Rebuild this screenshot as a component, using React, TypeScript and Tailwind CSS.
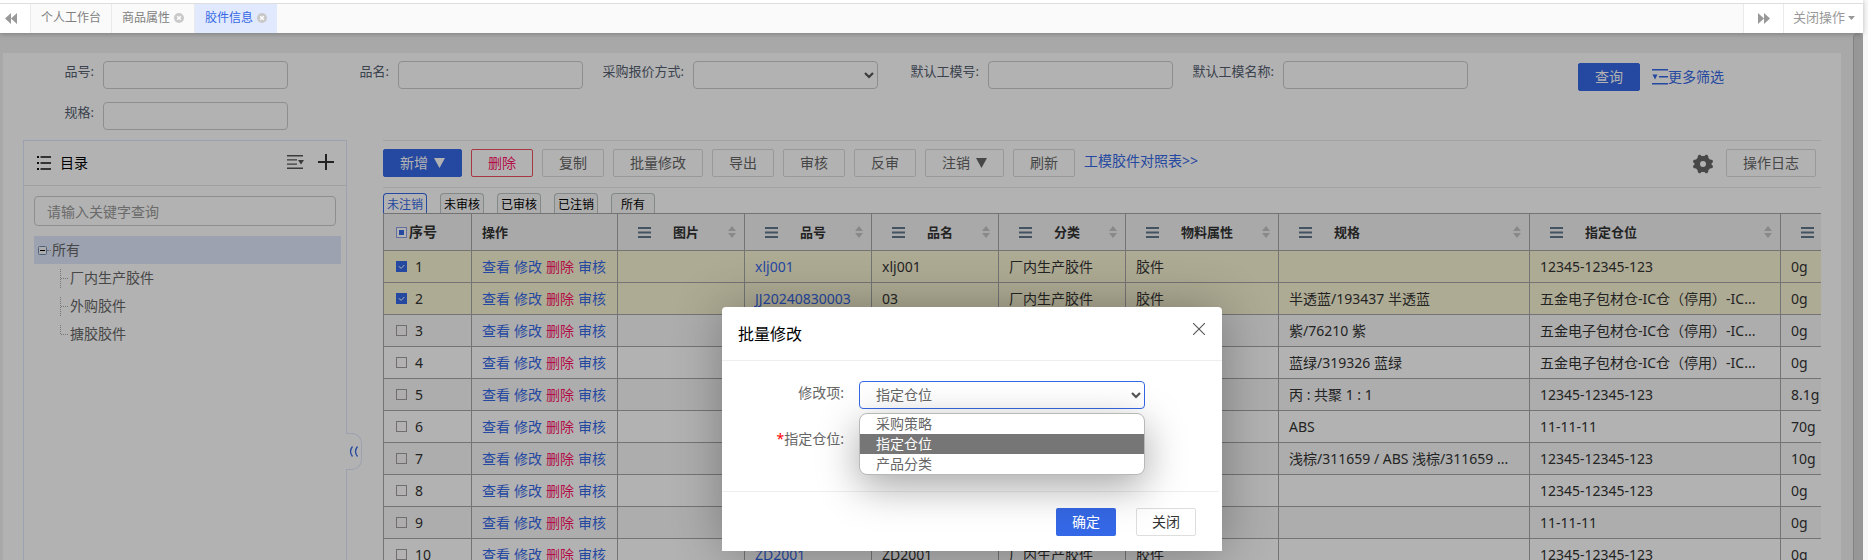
import type { ReactNode } from 'react';

const filters = [
  { id: 'code', label: '品号:' },
  { id: 'name', label: '品名:' },
  { id: 'quote', label: '采购报价方式:', select: true },
  { id: 'mold', label: '默认工模号:' },
  { id: 'moldName', label: '默认工模名称:' },
  { id: 'spec', label: '规格:' },
];

const columns = ['图片', '品号', '品名', '分类', '物料属性', '规格', '指定仓位'];

const LONG = '五金电子包材仓-IC仓（停用）-IC...';
const A = '12345-12345-123';
const B = '11-11-11';

const rows = [
  { code: 'xlj001', name: 'xlj001', type: '厂内生产胶件', attr: '胶件', spec: '', place: A, weight: '0g', checked: true },
  { code: 'JJ20240830003', name: '03', type: '厂内生产胶件', attr: '胶件', spec: '半透蓝/193437 半透蓝', place: LONG, weight: '0g', checked: true },
  { spec: '紫/76210 紫', place: LONG, weight: '0g' },
  { spec: '蓝绿/319326 蓝绿', place: LONG, weight: '0g' },
  { spec: '丙 : 共聚 1 : 1', place: A, weight: '8.1g' },
  { spec: 'ABS', place: B, weight: '70g' },
  { spec: '浅棕/311659 / ABS 浅棕/311659 ...', place: A, weight: '10g' },
  { spec: '', place: A, weight: '0g' },
  { spec: '', place: B, weight: '0g' },
  { code: 'ZD2001', name: 'ZD2001', type: '厂内生产胶件', attr: '胶件', spec: '', place: A, weight: '0g' },
];

function Chevron() {
  return (
    <svg viewBox="0 0 10 7" className="pointer-events-none absolute right-1 top-[11px] h-[7px] w-[10px]" fill="none" stroke="#555" strokeWidth="2.2">
      <path d="M1 1l4 4 4-4" />
    </svg>
  );
}

function Burger() {
  return (
    <svg viewBox="0 0 13 11" className="h-[11px] w-[13px] shrink-0" fill="#62778c">
      <path d="M0 0h13v2H0zM0 4.5h13v2H0zM0 9h13v2H0z" />
    </svg>
  );
}

function Sort() {
  return (
    <svg viewBox="0 0 8 12" className="ml-auto h-3 w-2 shrink-0" fill="#c4c4c4">
      <path d="M0 5l4-5 4 5zM0 7h8l-4 5z" />
    </svg>
  );
}

function CloseDot() {
  return (
    <svg viewBox="0 0 10 10" className="h-[10px] w-[10px]">
      <circle cx="5" cy="5" r="5" fill="#c9c9c9" />
      <path d="M3.2 3.2l3.6 3.6M6.8 3.2L3.2 6.8" stroke="#fff" strokeWidth="1.4" />
    </svg>
  );
}

function Check({ label, checked, mixed }: { label: string; checked?: boolean; mixed?: boolean }) {
  return (
    <span className="relative block h-[11px] w-[11px] shrink-0">
      <input
        type="checkbox"
        aria-label={label}
        defaultChecked={checked}
        className={
          checked
            ? 'block h-[11px] w-[11px] appearance-none bg-[#3568e6]'
            : mixed
              ? 'block h-[11px] w-[11px] appearance-none border border-[#8f9fe0] bg-white'
              : 'block h-[11px] w-[11px] appearance-none border border-[#a29da2]'
        }
      />
      {(checked || mixed) && (
        <svg viewBox="0 0 11 11" className="pointer-events-none absolute inset-0 h-[11px] w-[11px]" fill="none">
          {checked ? <path d="M2.8 5.2l2.2 2.2 3.4-3.4" stroke="#fff" /> : <path d="M3 3h5v5H3z" fill="#3568e6" />}
        </svg>
      )}
    </span>
  );
}

function ToolButton({ children, kind = 'plain' }: { children: ReactNode; kind?: 'plain' | 'primary' | 'danger' }) {
  const colors = {
    plain: 'border-[#dcdcdc] text-[#666]',
    primary: 'border-[#3568e6] bg-[#3568e6] text-white',
    danger: 'border-[#f05060] text-[#ff1468]',
  };
  return (
    <button className={`flex h-7 shrink-0 items-center rounded-xs border px-4 text-sm whitespace-nowrap ${colors[kind]}`}>
      {children}
    </button>
  );
}

function Triangle() {
  return (
    <svg viewBox="0 0 11 10" className="ml-[6px] h-[10px] w-[11px]" fill="currentColor">
      <path d="M0 0h11L5.500 10z" />
    </svg>
  );
}

function TopBar() {
  return (
    <header className="relative z-10 flex h-[33px] shrink-0 bg-[#fafafa] pt-[3px] text-xs text-[#808080] shadow-[0_1px_5px_rgba(0,0,0,0.25)] before:absolute before:inset-x-0 before:top-0 before:h-[4px] before:border-b before:border-[#dedede] before:bg-white">
      <button aria-label="向左" className="flex w-[31px] items-center border-r border-[#eaeaea] bg-white pl-[5px]">
        <svg viewBox="0 0 12 11" className="h-[11px] w-3" fill="#999">
          <path d="M6 0v11L0 5.500zM12 0v11L6 5.500z" />
        </svg>
      </button>
      <nav className="flex flex-1">
        <a href="#desk" className="flex items-center border-r border-[#eaeaea] px-[10px]">个人工作台</a>
        <a href="#goods" className="flex items-center gap-1 border-r border-[#eaeaea] px-[10px]">
          商品属性
          <CloseDot />
        </a>
        <a href="#parts" className="flex items-center gap-1 bg-[#e0e9fd] px-[10px] text-[#3568e6]">
          胶件信息
          <CloseDot />
        </a>
      </nav>
      <button aria-label="向右" className="flex w-10 items-center justify-center border-l border-[#eaeaea] bg-white">
        <svg viewBox="0 0 12 11" className="h-[11px] w-3" fill="#999">
          <path d="M0 0v11l6-5.500zM6 0v11l6-5.500z" />
        </svg>
      </button>
      <button className="flex w-20 items-center gap-[3px] border-l border-[#eaeaea] bg-white pl-[9px] text-[13px] text-[#999]">
        关闭操作
        <svg viewBox="0 0 7 4" className="h-1 w-[7px]" fill="#999">
          <path d="M0 0h7L3.500 4z" />
        </svg>
      </button>
    </header>
  );
}

function FilterBar() {
  return (
    <form className="flex h-[87px] items-start overflow-hidden pt-2">
      <div className="grid w-[1475px] shrink-0 grid-cols-[285px_295px_295px_295px_295px] gap-y-[13px]">
        {filters.map((f) => (
          <div key={f.id} className="flex items-start justify-end gap-[9px]">
            <label htmlFor={f.id} className="text-[13px] leading-5 text-[#556070]">{f.label}</label>
            {f.select ? (
              <div className="relative">
                <select id={f.id} className="block h-7 w-[185px] appearance-none rounded border border-[#ccc] bg-white">
                  <option></option>
                </select>
                <Chevron />
              </div>
            ) : (
              <input id={f.id} className="block h-7 w-[185px] rounded border border-[#ccc] px-2 text-sm" />
            )}
          </div>
        ))}
      </div>
      <div className="ml-[100px] flex shrink-0 items-center gap-3 pt-[2px]">
        <ToolButton kind="primary">查询</ToolButton>
        <a href="#more" className="flex items-center text-sm text-[#3568e6]">
          <svg viewBox="0 0 16 16" className="h-4 w-4" fill="#3568e6">
            <path d="M0 0h16v1.500H0zM7 7h9v1.500H7zM0 14h16v1.500H0zM0.500 5.500h5l-2.500 5z" />
          </svg>
          更多筛选
        </a>
      </div>
    </form>
  );
}

function Sidebar() {
  return (
    <aside className="relative w-[324px] shrink-0 border border-b-0 border-[#dfe7fb]">
      <div className="flex h-[45px] items-center border-b border-[#e6e6e6] pl-[13px] pr-3">
        <svg viewBox="0 0 14 14" className="h-[14px] w-[14px]" fill="#111">
          <path d="M0 0h2v2H0zM0 6h2v2H0zM0 12h2v2H0zM3.500 0.300H14v1.400H3.500zM3.500 6.300H14v1.400H3.500zM3.500 12.300H14v1.400H3.500z" />
        </svg>
        <h2 className="ml-[9px] text-sm text-black">目录</h2>
        <button aria-label="展开" className="ml-auto pb-[2px]">
          <svg viewBox="0 0 17 14" className="h-[14px] w-[17px]" fill="#555">
            <path d="M0 0h16v1.400H0zM0 4.200h10v1.400H0zM0 8.400h10v1.400H0zM0 12.600h16V14H0zM11 5h6l-3 4.500z" />
          </svg>
        </button>
        <button aria-label="新增目录" className="ml-[14px] pb-[2px]">
          <svg viewBox="0 0 16 16" className="h-4 w-4" fill="#333">
            <path d="M7 0h2v16H7zM0 7h16v2H0z" />
          </svg>
        </button>
      </div>
      <div className="pl-[10px] pr-[5px] pt-[10px]">
        <input
          aria-label="关键字"
          placeholder="请输入关键字查询"
          className="block h-[30px] w-[302px] rounded border border-[#ccc] px-3 text-sm placeholder:text-[#999]"
        />
        <ul className="mt-[10px] text-sm text-[#666]">
          <li className="flex h-7 items-center bg-[#e1e9fe] pl-1">
            <svg viewBox="0 0 9 9" className="h-[9px] w-[9px]">
              <rect x="0.5" y="0.5" width="8" height="8" rx="1" fill="#f6f6f6" stroke="#6f8fb0" />
              <path d="M2 4.500h5" stroke="#000" />
            </svg>
            <span className="mr-px w-1 border-t border-dotted border-[#999]" />
            所有
          </li>
          {['厂内生产胶件', '外购胶件', '搪胶胶件'].map((name, i) => (
            <li key={name} className="flex h-7 items-center pl-[26px]">
              <svg viewBox="0 0 10 19" className="h-[19px] w-[10px]" fill="none" stroke="#aaa" strokeDasharray="1 1">
                <path d={i === 2 ? 'M0.500 0v9.500' : 'M0.500 0v19'} />
                <path d="M1 9.500h8" />
              </svg>
              {name}
            </li>
          ))}
        </ul>
      </div>
      <button
        aria-label="收起"
        className="absolute left-[322px] top-[292px] flex h-[37px] w-4 items-center justify-center rounded-r-[10px] border border-l-0 border-[#dfe7fb] bg-white"
      >
        <svg viewBox="0 0 9 11" className="h-[11px] w-[9px]" fill="none" stroke="#3568e6" strokeWidth="1.3">
          <path d="M3.500 0.500Q-0.500 5.500 3.500 10.500M8.500 0.500Q4.500 5.500 8.500 10.500" />
        </svg>
      </button>
    </aside>
  );
}

function Toolbar() {
  return (
    <div className="flex h-12 items-start gap-[9px] border-y border-[#e8e8e8] pt-2 pr-[5px]">
      <ToolButton kind="primary">新增<Triangle /></ToolButton>
      <ToolButton kind="danger">删除</ToolButton>
      <ToolButton>复制</ToolButton>
      <ToolButton>批量修改</ToolButton>
      <ToolButton>导出</ToolButton>
      <ToolButton>审核</ToolButton>
      <ToolButton>反审</ToolButton>
      <ToolButton>注销<Triangle /></ToolButton>
      <ToolButton>刷新</ToolButton>
      <a href="#compare" className="pt-[2px] text-sm whitespace-nowrap text-[#3568e6]">工模胶件对照表&gt;&gt;</a>
      <button aria-label="设置" className="mr-1 ml-auto pt-[5px]">
        <svg viewBox="0 0 20 20" className="h-5 w-5" fill="#666" fillRule="evenodd">
          <path d="M5 1.500L7 .500l1.500 1.500h3L13 .500l2 1 .500 2.500 1.500 1.500 2.500.500.500 2-1.500 1.500v1l1.500 1.500-.500 2-2.500.500-1.500 1.500L15 18.500l-2 1-1.500-1.500h-3L7 19.500l-2-1-.500-2.500L3 14.500.500 14 0 12l1.500-1.500v-1L0 8l.500-2L3 5.500 4.500 4zM10 7a3 3 0 100 6 3 3 0 000-6z" />
        </svg>
      </button>
      <ToolButton>操作日志</ToolButton>
    </div>
  );
}

function StatusTabs() {
  return (
    <div className="flex gap-[13px] pt-[5px] text-xs text-black">
      <button className="h-5 w-11 rounded-t border border-b-0 border-[#3568e6] pt-[2px] leading-4 text-[#3568e6]">未注销</button>
      {['未审核', '已审核', '已注销', '所有'].map((name) => (
        <button key={name} className="h-5 w-11 rounded-t border border-b-0 border-[#bcc4c4] bg-[#f8f8f8] pt-[2px] leading-4">{name}</button>
      ))}
    </div>
  );
}

function PartsTable() {
  const th = 'h-[37px] border-r border-b border-[#a6a6a8] p-0 text-left text-[13px] font-bold text-[#333]';
  const td = 'h-8 overflow-hidden border-r border-b border-[#a6a6a8] px-[10px] py-0 whitespace-nowrap';
  return (
    <div className="overflow-hidden">
      <table className="w-[1525px] table-fixed border-separate border-spacing-0 border-t border-l border-[#a6a6a8] text-sm text-[#333]">
        <colgroup>
          <col className="w-[88px]" />
          <col className="w-[146px]" />
          <col className="w-[127px]" />
          <col className="w-[127px]" />
          <col className="w-[127px]" />
          <col className="w-[127px]" />
          <col className="w-[153px]" />
          <col className="w-[251px]" />
          <col className="w-[251px]" />
          <col />
        </colgroup>
        <thead>
          <tr className="bg-[#f2f2f2]">
            <th className={th}>
              <span className="flex items-center gap-[2px] pl-3 text-sm">
                <Check label="全选" mixed />
                序号
              </span>
            </th>
            <th className={th}><span className="pl-[10px]">操作</span></th>
            {columns.map((name) => (
              <th key={name} className={th}>
                <span className="flex items-center pl-5 pr-2">
                  <Burger />
                  <span className="ml-[22px]">{name}</span>
                  <Sort />
                </span>
              </th>
            ))}
            <th aria-label="重量" className={th}><span className="flex pl-5"><Burger /></span></th>
          </tr>
        </thead>
        <tbody>
          {rows.map((row, i) => (
            <tr key={i} className={row.checked ? 'bg-[#faf5d4]' : i % 2 ? 'bg-white' : 'bg-[#f8f8f8]'}>
              <td className={td}>
                <span className="flex items-center gap-2 pl-[2px]">
                  <Check label={`选择 ${i + 1}`} checked={row.checked} />
                  {i + 1}
                </span>
              </td>
              <td className={td}>
                <span className="flex gap-1 text-[#3568e6]">
                  <a href="#view">查看</a>
                  <a href="#edit">修改</a>
                  <a href="#delete" className="text-[#ff1468]">删除</a>
                  <a href="#audit">审核</a>
                </span>
              </td>
              <td className={td} />
              <td className={td}>{row.code && <a href="#part" className="text-[#3568e6]">{row.code}</a>}</td>
              <td className={td}>{row.name}</td>
              <td className={td}>{row.type}</td>
              <td className={td}>{row.attr}</td>
              <td className={td}>{row.spec}</td>
              <td className={td}>{row.place}</td>
              <td className={td}>{row.weight}</td>
            </tr>
          ))}
        </tbody>
      </table>
    </div>
  );
}

function BatchDialog() {
  return (
    <div role="dialog" aria-label="批量修改" className="absolute left-[722px] top-[274px] z-20 w-[500px] rounded-t bg-white text-sm text-[#666] shadow-[1px_1px_50px_rgba(0,0,0,0.3)]">
      <div className="flex h-[54px] items-center justify-between border-b border-[#eee] pl-4 pr-[17px]">
        <h3 className="text-base text-black">批量修改</h3>
        <button aria-label="关闭窗口" className="pb-[10px]">
          <svg viewBox="0 0 12 12" className="h-3 w-3" stroke="#555" strokeWidth="1.1">
            <path d="M0 0l12 12M12 0L0 12" />
          </svg>
        </button>
      </div>
      <div className="h-[130px] pt-5">
        <div className="flex">
          <label htmlFor="field" className="w-[122px] pt-[2px] text-right leading-5">修改项:</label>
          <div className="relative ml-[15px] w-[286px]">
            <select id="field" defaultValue="指定仓位" className="block h-7 w-full appearance-none rounded border border-[#3568e6] bg-white pl-4 text-sm">
              <option>指定仓位</option>
            </select>
            <Chevron />
            <ul role="listbox" aria-label="修改项" className="absolute inset-x-0 top-8 overflow-hidden rounded-lg border border-[#b8b8b8] bg-white leading-5 shadow-[0_12px_40px_rgba(0,0,0,0.35)]">
              <li role="option" aria-selected={false} className="pl-4">采购策略</li>
              <li role="option" aria-selected className="bg-[#767676] pl-4 text-white">指定仓位</li>
              <li role="option" aria-selected={false} className="pl-4">产品分类</li>
            </ul>
          </div>
        </div>
        <p className="mt-5 w-[122px] text-right leading-5"><span className="text-[#f00]">*</span>指定仓位:</p>
      </div>
      <div className="mr-[3px] flex h-[60px] items-center justify-end gap-5 border-t border-[#eee] pr-[23px]">
        <button className="h-7 w-[60px] rounded-xs bg-[#3568e6] text-white">确定</button>
        <button className="h-7 w-[60px] rounded-xs border border-[#dedede] bg-white text-[#333]">关闭</button>
      </div>
    </div>
  );
}

export default function App() {
  return (
    <div className="flex h-screen overflow-hidden bg-[#f8f8f8] pr-[5px] font-['Noto_Sans','Noto_Sans_CJK_SC',sans-serif]">
      <div className="flex min-w-0 flex-1 flex-col">
        <TopBar />
        <div className="relative flex min-h-0 flex-1 overflow-hidden bg-[#f1f1f1]">
          <main className="mt-5 ml-[3px] min-w-0 flex-1 overflow-hidden bg-white">
            <FilterBar />
            <div className="flex pl-5 pr-5">
              <Sidebar />
              <section className="ml-9 min-w-0 flex-1">
                <Toolbar />
                <StatusTabs />
                <PartsTable />
              </section>
            </div>
          </main>
          <div className="ml-3 w-[10px] rounded-t-full border-l border-[#bbb] bg-[#d8d8d8]" />
          <div className="absolute inset-0 z-10 bg-black/30" />
          <BatchDialog />
        </div>
      </div>
    </div>
  );
}
